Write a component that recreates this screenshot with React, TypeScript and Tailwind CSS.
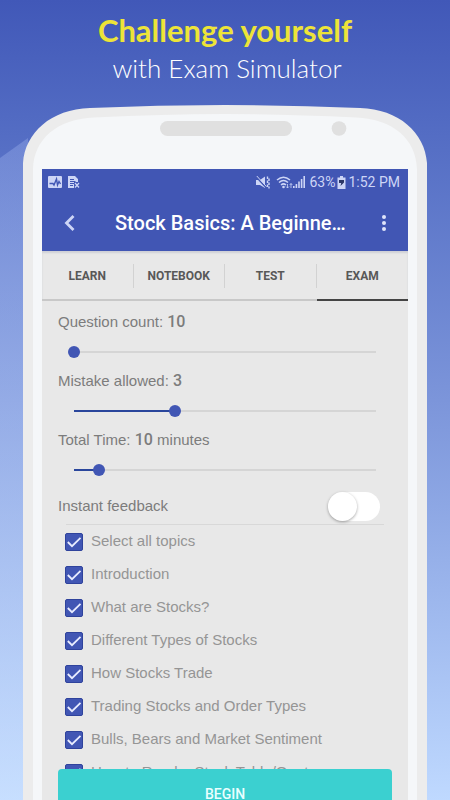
import { useState } from "react";

const TABS = ["LEARN", "NOTEBOOK", "TEST", "EXAM"];

const TOPICS = [
  "Select all topics",
  "Introduction",
  "What are Stocks?",
  "Different Types of Stocks",
  "How Stocks Trade",
  "Trading Stocks and Order Types",
  "Bulls, Bears and Market Sentiment",
  "How to Read a Stock Table/Quote",
];

function PhoneTop() {
  return (
    <svg viewBox="0 0 404 64" className="block w-full" aria-hidden="true">
      <path d="M0 64V58C2 28 28 4 67 3Q135 0 202 0T337 3C376 4 402 28 404 58V64Z" fill="#ececec" />
      <path d="M10 64C11 34 34 14 71 12.5Q140 9 202 9T333 12.5C370 14 393 34 394 64Z" fill="#f5f7f9" />
      <rect x="137" y="16" width="132" height="15" rx="7.5" fill="#e0e0e0" />
      <circle cx="316" cy="23.500" r="7.300" fill="#e0e0e0" />
    </svg>
  );
}

function StatusBar() {
  return (
    <div className="flex h-[26px] items-center justify-between pl-1.5 pr-2 text-[#cdd5f6]">
      <div className="flex items-center gap-1.5">
        <svg width="14" height="12" viewBox="0 0 14 12" aria-hidden="true">
          <rect width="14" height="12" rx="1" fill="currentColor" />
          <path d="M1.500 7.500H5L6 9L8.500 3L9.500 9L11 5.500L12.500 8" fill="none" stroke="#4156b4" strokeWidth="1.400" />
        </svg>
        <svg width="12" height="12" viewBox="0 0 12 12" aria-hidden="true">
          <path d="M0 0H7L10 3V6H8V12H0Z" fill="currentColor" />
          <path d="M2 3.500H6M2 5.500H7.500M2 7.500H6M2 9.500H5" stroke="#4156b4" strokeWidth="1" />
          <path d="M6 6H12V12H6Z" fill="#4156b4" />
          <path d="M7 7L11 11.500M11 7L7 11.500" stroke="currentColor" strokeWidth="1.200" />
        </svg>
      </div>
      <div className="flex items-center">
        <svg width="14" height="13" viewBox="0 0 14 13" className="mr-1.5" aria-hidden="true">
          <path d="M0 4H4L9 0.500V12L4 9H0Z" fill="currentColor" />
          <path d="M0 0.500L10 11.500" stroke="#4156b4" strokeWidth="1.600" />
          <path d="M0.800 0L10.500 10.700" stroke="currentColor" strokeWidth="1" />
          <path d="M11.500 0.500V3M13 2.500V5M11.500 4.500V7M13 6.500V9M11.500 8.500V11M13 10.500V12.500" stroke="currentColor" strokeWidth="1.400" />
        </svg>
        <svg width="17" height="13" viewBox="0 0 17 13" aria-hidden="true">
          <path d="M1 4Q7.500 -1.500 14 4M3 6.500Q7.500 2.500 12 6.500M5 9Q7.500 6.800 10 9" fill="none" stroke="currentColor" strokeWidth="1.500" />
          <circle cx="7.500" cy="11" r="1.300" fill="currentColor" />
          <path d="M11.500 8V12M10 10.500L11.500 12L13 10.500M15 12V7.500M13.700 9L15 7.500L16.300 9" fill="none" stroke="currentColor" strokeWidth="0.800" />
        </svg>
        <svg width="12" height="12" viewBox="0 0 12 12" className="mr-1" aria-hidden="true">
          <path d="M0 10H1.600V12H0ZM2.600 8H4.200V12H2.600ZM5.200 5.500H6.800V12H5.200ZM7.800 3H9.400V12H7.800ZM10.400 0H12V12H10.400Z" fill="currentColor" />
        </svg>
        <span className="text-sm leading-none">63%</span>
        <svg width="9" height="13" viewBox="0 0 9 13" className="mx-0.5" aria-hidden="true">
          <path d="M3 0H6V1.500H8.500V13H0.500V1.500H3Z" fill="currentColor" />
          <path d="M2 4H7V6.500L3.500 10L4.200 7H2Z" fill="#2c3766" />
        </svg>
        <span className="text-sm leading-none">1:52 PM</span>
      </div>
    </div>
  );
}

function AppBar() {
  return (
    <div className="flex h-14 items-center pl-4 pr-4">
      <button type="button" aria-label="Back" className="text-[#cdd5f6]">
        <svg width="24" height="24" viewBox="0 0 24 24" aria-hidden="true">
          <path d="M15.500 5L8.500 12L15.500 19" fill="none" stroke="currentColor" strokeWidth="2.800" />
        </svg>
      </button>
      <h2 className="min-w-0 flex-1 truncate pl-[33px] text-xl font-medium text-white">Stock Basics: A Beginne…</h2>
      <button type="button" aria-label="More options" className="flex w-4 flex-col items-center gap-0.5">
        <span className="size-1 rounded-full bg-[#dfe4fa]" />
        <span className="size-1 rounded-full bg-[#dfe4fa]" />
        <span className="size-1 rounded-full bg-[#dfe4fa]" />
      </button>
    </div>
  );
}

function Tabs() {
  const [active, setActive] = useState("EXAM");
  return (
    <nav className="grid shrink-0 grid-cols-4 shadow-[inset_0_2px_2px_#cfd0d6]">
      {TABS.map((tab, i) => (
        <button
          key={tab}
          type="button"
          onClick={() => setActive(tab)}
          className={`flex h-[50px] items-center border-b-2 pt-0.5 text-xs font-bold text-[#585858] ${
            active === tab ? "border-[#444444]" : "border-[#c8c8c8]"
          }`}
        >
          <span className={`flex h-6 flex-1 items-center justify-center ${i < 3 ? "border-r border-[#d2d2d2]" : ""}`}>
            {tab}
          </span>
        </button>
      ))}
    </nav>
  );
}

type SettingProps = { id: string; label: string; unit?: string; min: number; max: number; initial: number };

function SliderSetting({ id, label, unit, min, max, initial }: SettingProps) {
  const [value, setValue] = useState(initial);
  const percent = ((value - min) / (max - min)) * 100;
  return (
    <div className="h-[59px]">
      <label htmlFor={id} className="block h-5 text-[15px] leading-5">
        {label}: <span className="font-[Roboto] text-base font-medium leading-5">{value}</span>
        {unit ? ` ${unit}` : ""}
      </label>
      <div className="mx-2.5 mt-3.5 grid h-3 items-center">
        <div className="col-start-1 row-start-1 mx-1.5 h-0.5 bg-[#d5d5d5]">
          <div className="h-full bg-[#2a469c]" style={{ width: `${percent}%` }} />
        </div>
        <input
          id={id}
          type="range"
          min={min}
          max={max}
          value={value}
          onChange={(e) => setValue(Number(e.target.value))}
          className="col-start-1 row-start-1 h-3 w-full appearance-none bg-transparent [&::-webkit-slider-thumb]:size-3 [&::-webkit-slider-thumb]:appearance-none [&::-webkit-slider-thumb]:rounded-full [&::-webkit-slider-thumb]:bg-[#4156b4]"
        />
      </div>
    </div>
  );
}

function TopicRow({ label }: { label: string }) {
  return (
    <li>
      <label className="flex h-[33px] items-center gap-2 text-[15px] text-[#959595]">
        <span className="grid">
          <input
            type="checkbox"
            defaultChecked
            className="peer col-start-1 row-start-1 size-[18px] appearance-none rounded-xs border border-[#2f439c] checked:bg-[#4156b4]"
          />
          <svg viewBox="0 0 18 18" className="pointer-events-none invisible col-start-1 row-start-1 size-[18px] peer-checked:visible" aria-hidden="true">
            <path d="M2.800 9L7 13.200L15.500 4.800" fill="none" stroke="#e8ecff" strokeWidth="1.800" />
          </svg>
        </span>
        {label}
      </label>
    </li>
  );
}

export default function App() {
  return (
    <div className="relative flex h-screen flex-col overflow-hidden bg-linear-to-b from-[#4158b8] via-[#7c95da] to-[#bfd9ff] font-[Roboto,sans-serif]">
      <div className="absolute bottom-0 left-0 top-[138px] w-7 bg-linear-to-b from-[#a0b4f0]/35 to-[#cfe4ff]/50 [clip-path:polygon(100%_0,100%_100%,0_100%,0_20px)]" />
      <header className="h-[105px] shrink-0 pt-3 text-center font-[Lato,sans-serif]">
        <h1 className="text-[31px] font-bold leading-9 text-[#ede438]">Challenge yourself</h1>
        <p className="pl-1 text-[26px] font-light leading-10 text-white">with Exam Simulator</p>
      </header>
      <main className="relative mx-[23px] flex min-h-0 flex-1 flex-col">
        <PhoneTop />
        <div className="flex min-h-0 flex-1 flex-col border-x-[10px] border-[#ececec] bg-[#f5f7f9] px-[9px]">
          <div className="flex min-h-0 flex-1 flex-col bg-[#e8e8e8]">
            <div className="shrink-0 bg-[#4156b4]">
              <StatusBar />
              <AppBar />
            </div>
            <Tabs />
            <section className="min-h-0 flex-1 overflow-hidden px-4 pt-[11px] font-['Liberation_Sans',Arial,sans-serif] text-[#7c7c7c]">
              <SliderSetting id="questions" label="Question count" min={10} max={100} initial={10} />
              <SliderSetting id="mistakes" label="Mistake allowed" min={0} max={9} initial={3} />
              <SliderSetting id="time" label="Total Time" unit="minutes" min={5} max={65} initial={10} />
              <div className="flex h-[35px] items-center justify-between pr-3 text-[15px]">
                <label htmlFor="feedback">Instant feedback</label>
                <input
                  id="feedback"
                  type="checkbox"
                  role="switch"
                  className="h-[29px] w-[52px] appearance-none rounded-full bg-white before:block before:size-[29px] before:rounded-full before:bg-white before:shadow-[0_1px_3px_rgba(0,0,0,0.35)] checked:bg-[#4156b4] checked:before:translate-x-[23px]"
                />
              </div>
              <hr className="mx-2 border-[#d8d8d8]" />
              <ul className="pl-[7px]">
                {TOPICS.map((topic) => (
                  <TopicRow key={topic} label={topic} />
                ))}
              </ul>
            </section>
            <footer className="h-[31px] shrink-0 px-4">
              <button type="button" className="h-[50px] w-full rounded-t bg-[#3bd0d0] text-sm font-medium text-[#e9ffff]">
                BEGIN
              </button>
            </footer>
          </div>
        </div>
      </main>
    </div>
  );
}
